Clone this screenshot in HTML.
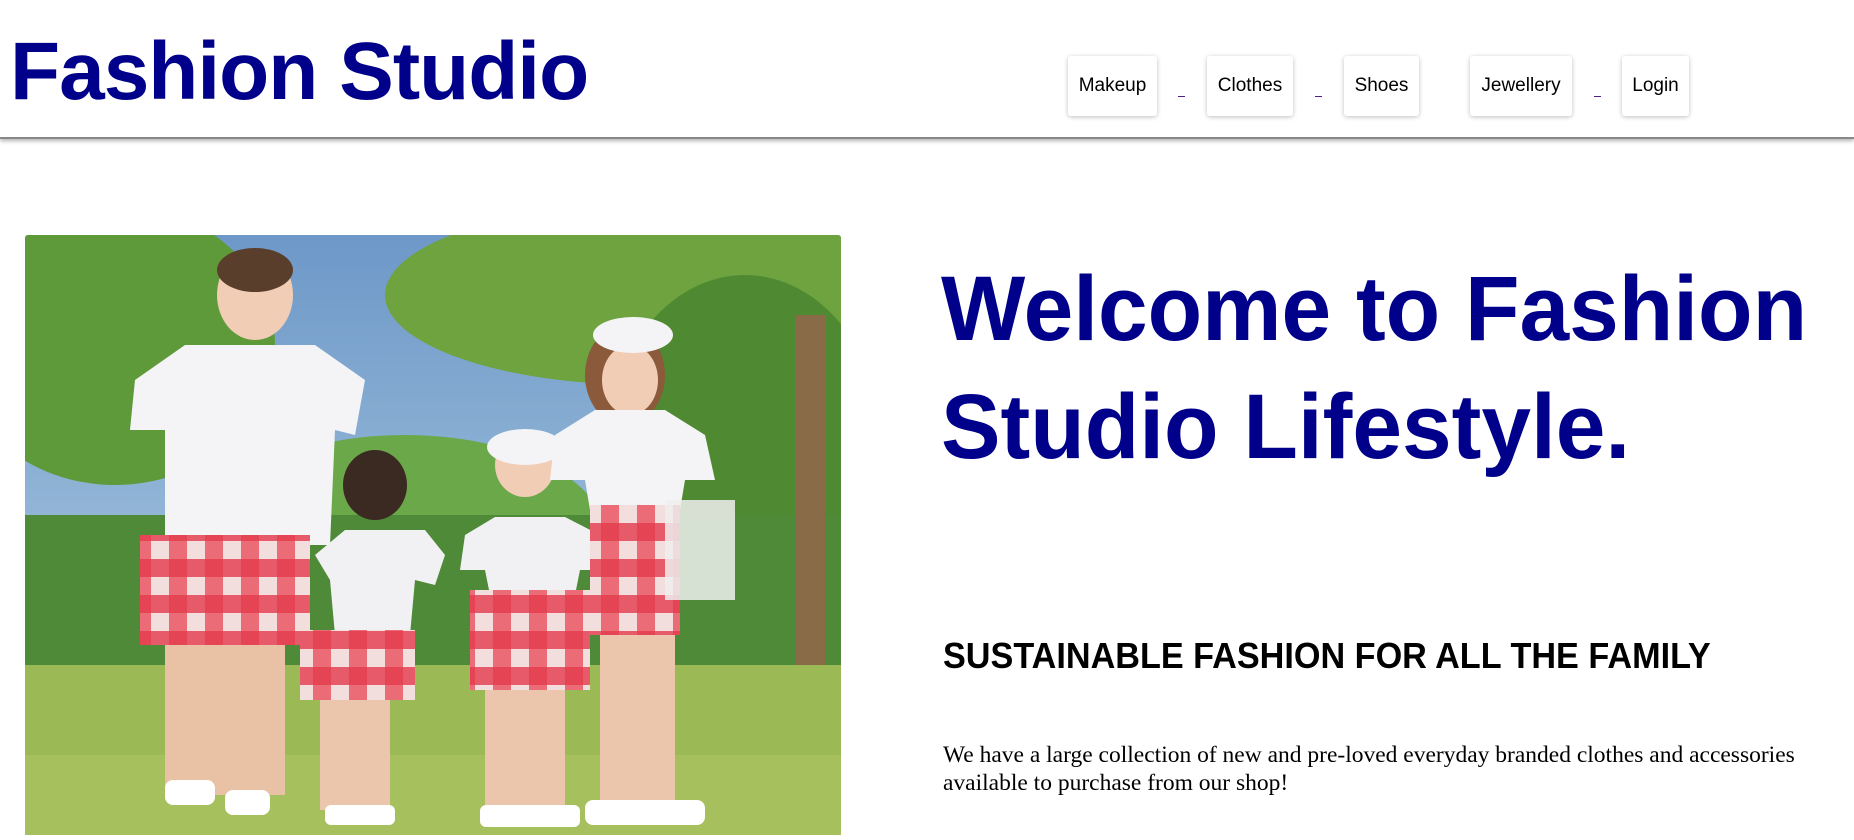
<!DOCTYPE html>
<html><head><meta charset="utf-8"><style>
*{margin:0;padding:0;box-sizing:border-box}
body{width:1854px;height:836px;background:#fff;overflow:hidden;position:relative;font-family:"Liberation Sans",sans-serif}
.hdr{position:absolute;left:0;top:0;width:1854px;height:139px;border-bottom:2px solid #888;box-shadow:0 2px 4px rgba(0,0,0,.3)}
.title{position:absolute;left:10px;top:25px;font-weight:bold;font-size:82px;color:#00008b;white-space:nowrap;letter-spacing:-1px}
.btn{position:absolute;top:56px;height:60px;background:#fff;border-radius:3px;box-shadow:0 1px 5px rgba(0,0,0,.25);font-size:19px;color:#000;display:flex;align-items:center;justify-content:center}
.u{position:absolute;top:96px;width:7px;height:1px;background:#551a8b}
.h1{position:absolute;left:941px;top:250px;font-weight:bold;font-size:92px;line-height:118px;color:#00008b;white-space:nowrap;transform:scaleX(0.97);transform-origin:left top}
.h2{position:absolute;left:943px;top:635px;font-weight:bold;font-size:36px;color:#000;white-space:nowrap;transform:scaleX(0.95);transform-origin:left top}
.p{position:absolute;left:943px;top:741px;width:880px;font-family:"Liberation Serif",serif;font-size:23.5px;line-height:28px;color:#000}
.img{position:absolute;left:25px;top:235px;border-radius:3px;overflow:hidden}
</style></head><body>
<div class="hdr"></div>
<div class="title">Fashion Studio</div>
<div class="btn" style="left:1068px;width:89px">Makeup</div>
<div class="u" style="left:1178px"></div>
<div class="btn" style="left:1207px;width:86px">Clothes</div>
<div class="u" style="left:1315px"></div>
<div class="btn" style="left:1344px;width:75px">Shoes</div>
<div class="btn" style="left:1470px;width:102px">Jewellery</div>
<div class="u" style="left:1594px"></div>
<div class="btn" style="left:1622px;width:67px">Login</div>

<div class="img"><svg width="816" height="600" viewBox="0 0 816 600">
<defs><pattern id="pl" width="36" height="36" patternUnits="userSpaceOnUse"><rect width="36" height="36" fill="#f3dede"/><rect width="18" height="36" fill="#e9505e" opacity=".8"/><rect width="36" height="18" fill="#e33a4c" opacity=".8"/></pattern>
<linearGradient id="sky" x1="0" y1="0" x2="0" y2="1"><stop offset="0" stop-color="#6d98c8"/><stop offset="1" stop-color="#bcd6e6"/></linearGradient></defs>
<rect width="816" height="600" fill="url(#sky)"/>
<ellipse cx="90" cy="110" rx="160" ry="140" fill="#5f9a3a"/>
<ellipse cx="620" cy="60" rx="260" ry="90" fill="#6ea33f"/>
<ellipse cx="720" cy="220" rx="140" ry="180" fill="#4f8a32"/>
<ellipse cx="380" cy="300" rx="200" ry="100" fill="#6aa84a"/>
<rect x="0" y="280" width="816" height="170" fill="#4e8a38"/>
<rect x="770" y="80" width="30" height="380" fill="#8a6b48"/>
<rect x="0" y="430" width="816" height="170" fill="#9bb955"/>
<rect x="0" y="520" width="816" height="80" fill="#a6c05e"/>
<rect x="140" y="400" width="120" height="160" fill="#e9c2a6"/>
<ellipse cx="230" cy="60" rx="38" ry="45" fill="#f0cdb4"/>
<ellipse cx="230" cy="35" rx="38" ry="22" fill="#5a3e2c"/>
<path d="M110 145 L160 110 L290 110 L340 145 L330 200 L310 195 L305 310 L140 310 L140 195 L105 195Z" fill="#f4f4f6"/>
<rect x="115" y="300" width="170" height="110" fill="url(#pl)"/>
<rect x="140" y="545" width="50" height="25" rx="8" fill="#fff"/><rect x="200" y="555" width="45" height="25" rx="8" fill="#fff"/>
<ellipse cx="350" cy="250" rx="32" ry="35" fill="#3a2a22"/>
<path d="M290 320 L320 295 L400 295 L420 320 L410 350 L390 345 L385 400 L310 400 L305 345Z" fill="#f1f1f4"/>
<rect x="275" y="395" width="115" height="70" fill="url(#pl)"/>
<rect x="295" y="465" width="70" height="110" fill="#ecc6ac"/>
<rect x="300" y="570" width="70" height="20" rx="6" fill="#fff"/>
<ellipse cx="500" cy="230" rx="30" ry="32" fill="#f0cdb4"/>
<ellipse cx="500" cy="212" rx="38" ry="18" fill="#f4f4f6"/>
<path d="M440 300 L470 282 L540 282 L575 300 L580 335 L555 335 L550 360 L465 360 L460 335 L435 335Z" fill="#f1f1f4"/>
<rect x="445" y="355" width="120" height="100" fill="url(#pl)"/>
<rect x="460" y="455" width="80" height="120" fill="#ecc6ac"/>
<rect x="455" y="570" width="100" height="22" rx="6" fill="#fff"/>
<ellipse cx="600" cy="140" rx="40" ry="50" fill="#8a5a3a"/>
<ellipse cx="605" cy="145" rx="28" ry="35" fill="#f0cdb4"/>
<ellipse cx="608" cy="100" rx="40" ry="18" fill="#f4f4f6"/>
<path d="M530 200 L570 175 L640 175 L680 200 L690 245 L660 245 L655 275 L565 275 L560 245 L525 245Z" fill="#f4f4f6"/>
<rect x="565" y="270" width="90" height="130" fill="url(#pl)"/>
<rect x="640" y="265" width="70" height="100" fill="#eee" opacity=".85"/>
<rect x="575" y="400" width="75" height="170" fill="#ecc6ac"/>
<rect x="560" y="565" width="120" height="25" rx="8" fill="#fff"/>
</svg></div>

<div class="h1">Welcome to Fashion<br>Studio Lifestyle.</div>
<div class="h2">SUSTAINABLE FASHION FOR ALL THE FAMILY</div>
<div class="p">We have a large collection of new and pre-loved everyday branded clothes and accessories available to purchase from our shop!</div>
</body></html>
